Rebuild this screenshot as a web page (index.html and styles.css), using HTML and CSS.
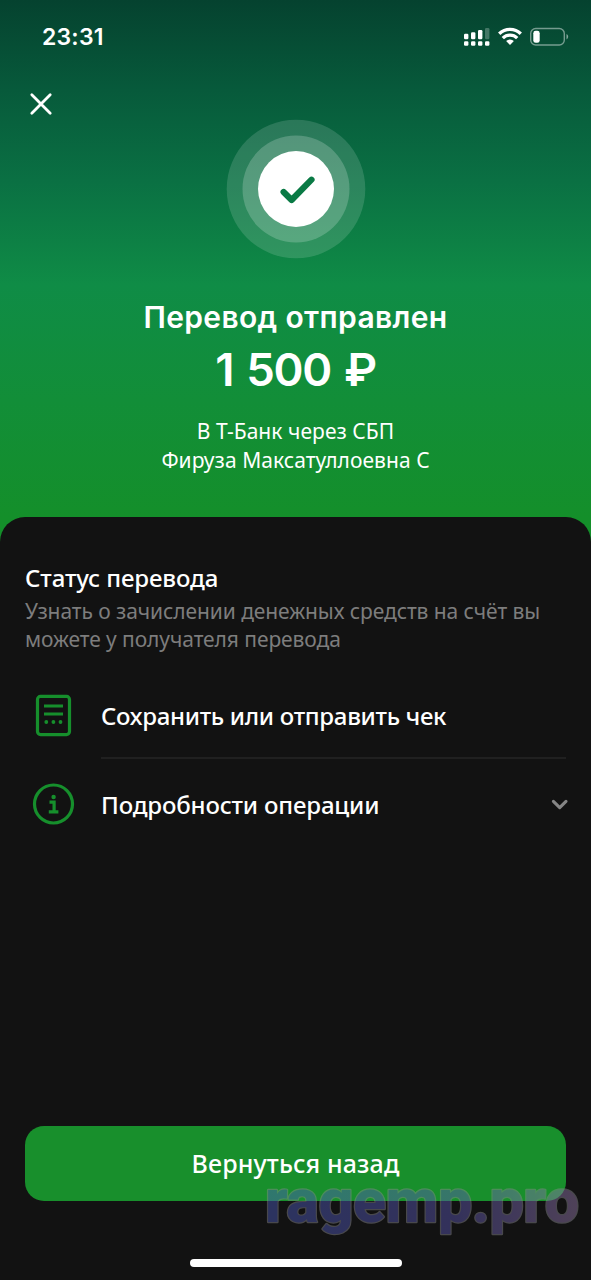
FILE: index.html
```html
<!DOCTYPE html>
<html lang="ru">
<head>
<meta charset="utf-8">
<title>Перевод отправлен</title>
<link rel="stylesheet" href="styles.css">
</head>
<body>
<div class="screen">
  <header class="hero">
    <div class="statusbar">
      <span class="time">23:31</span>
      <svg class="indicators" width="106" height="20" viewBox="0 0 106 20">
        <g fill="#fff">
          <rect x="1" y="6.7" width="4.4" height="5.5" rx="1.2"/><rect x="8" y="5.2" width="4.4" height="7" rx="1.2"/><rect x="15" y="3" width="4.4" height="9.2" rx="1.2"/>
          <rect x="22" y="1" width="4.4" height="11.2" rx="1.2" opacity=".25"/>
          <rect x="1" y="14.2" width="4.4" height="4.5" rx="1.2"/><rect x="8" y="14.2" width="4.4" height="4.5" rx="1.2"/><rect x="15" y="14.2" width="4.4" height="4.5" rx="1.2"/><rect x="22" y="14.2" width="4.4" height="4.5" rx="1.2"/>
          <path d="M47 18l-3.9-3.9a5.6 5.6 0 0 1 7.8 0z"/>
        </g>
        <g fill="none" stroke="#fff" stroke-width="3.3">
          <path d="M36.2 6.7a15.4 15.4 0 0 1 21.6 0"/>
          <path d="M39.8 11.2a10.2 10.2 0 0 1 14.4 0"/>
        </g>
        <rect x="67.7" y="1.5" width="33.6" height="16.5" rx="5" fill="none" stroke="#fff" stroke-opacity=".45" stroke-width="1.4"/>
        <path d="M103.5 7v5.4a3 3 0 0 0 0-5.4z" fill="#fff" opacity=".5"/>
        <rect x="70.3" y="3.8" width="6.4" height="12" rx="2.4" fill="#fff"/>
      </svg>
    </div>
    <svg class="close" width="24" height="24" viewBox="0 0 24 24"><path d="M2.8 2.8l18.4 18.4M21.2 2.8L2.8 21.2" fill="none" stroke="#fff" stroke-width="2.8" stroke-linecap="round"/></svg>
    <svg class="success" width="140" height="140" viewBox="0 0 140 140">
      <circle cx="70" cy="70" r="69.3" fill="#fff" fill-opacity=".14"/>
      <circle cx="70" cy="70" r="53.5" fill="#fff" fill-opacity=".2"/>
      <circle cx="70" cy="70" r="38" fill="#fff"/>
      <path d="M57.6 73l8 8L85.5 60.7" fill="none" stroke="#0a7a45" stroke-width="6.2" stroke-linecap="round" stroke-linejoin="round"/>
    </svg>
    <h1 class="title">Перевод отправлен</h1>
    <div class="amount">1 500 ₽</div>
    <p class="recipient">В Т-Банк через СБП<br>Фируза Максатуллоевна С</p>
  </header>
  <main class="sheet">
    <h2 class="status-title">Статус перевода</h2>
    <p class="status-text">Узнать о зачислении денежных средств на счёт вы<br>можете у получателя перевода</p>
    <div class="row first">
      <svg class="icon" width="44" height="44" viewBox="0 0 44 44" fill="none" stroke="#168f2c">
        <rect x="5.5" y="3.4" width="32" height="38.2" rx="3" stroke-width="3.2"/>
        <path d="M12 13.1h19M12 21.1h19" stroke-width="3"/>
        <g fill="#168f2c" stroke="none"><circle cx="14.3" cy="29" r="1.9"/><circle cx="21.4" cy="29" r="1.9"/><circle cx="28.5" cy="29" r="1.9"/></g>
      </svg>
      <span class="label save">Сохранить или отправить чек</span>
    </div>
    <div class="divider"></div>
    <div class="row details-row">
      <svg class="icon" width="44" height="44" viewBox="0 0 44 44" fill="none" stroke="#168f2c">
        <circle cx="21.5" cy="22" r="19" stroke-width="3.2"/>
        <path d="M17.5 20.2h4.6v10M16.8 29.9h9.6" stroke-width="3.2"/>
        <circle cx="21.6" cy="15" r="2.2" fill="#168f2c" stroke="none"/>
      </svg>
      <span class="label details">Подробности операции</span>
      <svg class="chevron" width="18" height="12" viewBox="0 0 18 12"><path d="M2.4 3.3L8.7 9.6l6.3-6.3" fill="none" stroke="#858585" stroke-width="3.1" stroke-linecap="round" stroke-linejoin="round"/></svg>
    </div>
    <button class="back">Вернуться назад</button>
    <div class="home"></div>
  </main>
  <svg class="watermark" width="330" height="90" viewBox="0 0 330 90">
    <defs>
      <linearGradient id="tint" x1="0" x2="1" y1="0" y2="0">
        <stop offset="0" stop-color="#4c5cbe"/>
        <stop offset=".6" stop-color="#5d58b4"/>
        <stop offset="1" stop-color="#9a7cae"/>
      </linearGradient>
    </defs>
    <text x="4" y="65" textLength="314" lengthAdjust="spacing">ragemp.pro</text>
  </svg>
</div>
</body>
</html>
```
FILE: styles.css
```css
* { box-sizing: border-box; }
body { margin: 0; background: #121212; }
.screen {
  position: relative;
  width: 591px;
  height: 1280px;
  overflow: hidden;
  display: flex;
  flex-direction: column;
  font-family: "Noto Sans", sans-serif;
  color: #fff;
  background: linear-gradient(180deg, #05422f 0, #075a3b 90px, #0a7043 180px, #0f8c46 285px, #128e38 400px, #148f2a 517px, #148f2a 545px, #121212 545px);
}
.hero {
  height: 517px;
  display: flex;
  flex-direction: column;
  align-items: center;
}
.statusbar {
  width: 100%;
  height: 72px;
  padding: 1px 22px 0 42px;
  display: flex;
  align-items: center;
  justify-content: space-between;
}
.time { font: 600 23px/28px Inter, sans-serif; letter-spacing: .2px; padding-top: 1px; }
.close { align-self: flex-start; margin: 20px 0 0 29px; }
.success { margin-top: 3px; }
.title { margin: 37px 0 0; font: 600 30px/42px Inter, sans-serif; letter-spacing: .35px; white-space: nowrap; }
.amount { font: 600 45.5px/64px Inter, sans-serif; letter-spacing: -1.3px; word-spacing: 2.8px; white-space: nowrap; }
.recipient { margin: 15px 0 0; font-size: 21px; line-height: 28.5px; letter-spacing: .05px; text-align: center; white-space: nowrap; }
.sheet {
  height: 763px;
  padding: 0 25px;
  display: flex;
  flex-direction: column;
  background: #121212;
  border-radius: 25px 25px 0 0;
}
.status-title { margin: 45px 0 0; font-size: 24px; font-weight: 500; line-height: 32px; letter-spacing: -.1px; white-space: nowrap; }
.status-text { margin: 3px 0 0; font-size: 21px; line-height: 28.3px; letter-spacing: -.08px; color: #7d7d7d; white-space: nowrap; }
.row { display: flex; align-items: center; height: 44px; padding-left: 7px; }
.first { margin-top: 39.4px; }
.icon { flex: none; margin-right: 25px; }
.label { padding-top: 2px; font-size: 24px; font-weight: 500; line-height: 32px; white-space: nowrap; }
.save { letter-spacing: -.31px; }
.details { letter-spacing: -.17px; }
.divider { height: 2px; margin: 20px 0 0 76px; background: #202020; }
.details-row { margin-top: 23px; }
.chevron { margin-left: auto; margin-right: -3px; }
.back {
  margin: 300px 0 0;
  padding: 0 0 1px;
  height: 75px;
  border: 0;
  border-radius: 19px;
  background: #188f2c;
  color: #fff;
  font: 500 25px/32px "Noto Sans", sans-serif;
  letter-spacing: .15px;
}
.home { width: 212px; height: 8px; margin: 58px auto 0; border-radius: 4px; background: #fff; }
.watermark { position: absolute; left: 261px; top: 1157px; opacity: .45; }
.watermark text {
  font: 800 61px Roboto, sans-serif;
  fill: url(#tint);
  stroke: #8b8b92;
  stroke-width: 2.4px;
  stroke-linejoin: round;
  paint-order: stroke;
}
```
